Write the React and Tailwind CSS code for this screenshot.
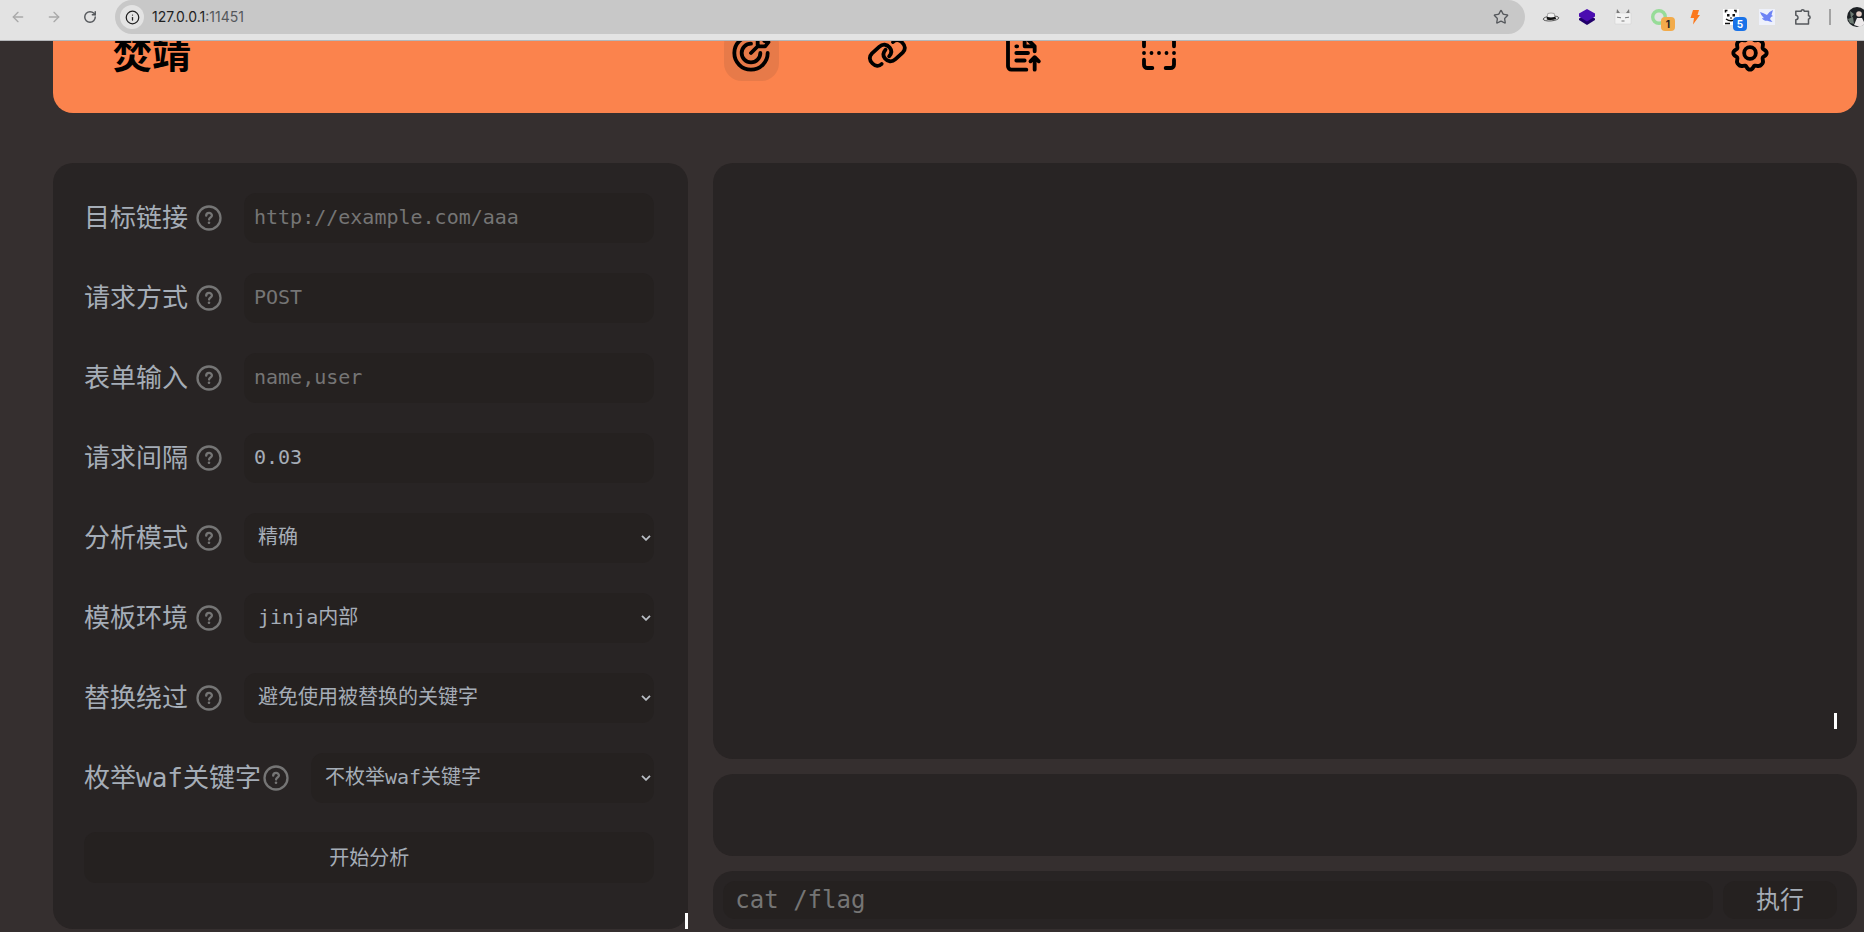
import React, { useState } from "react";
import { ArrowLeft, ArrowRight, Info, RotateCw, Star } from "lucide-react";

const fields = [
  { id: "url", label: "目标链接", placeholder: "http://example.com/aaa" },
  { id: "method", label: "请求方式", placeholder: "POST" },
  { id: "inputs", label: "表单输入", placeholder: "name,user" },
  { id: "interval", label: "请求间隔", value: "0.03" },
  { id: "analyze", label: "分析模式", options: ["精确", "快速"] },
  { id: "environment", label: "模板环境", options: ["jinja内部", "flask"] },
  {
    id: "replaced",
    label: "替换绕过",
    options: ["避免使用被替换的关键字", "双写被替换的关键字"],
  },
  {
    id: "waf",
    label: "枚举waf关键字",
    options: ["不枚举waf关键字", "枚举waf关键字"],
  },
];

const controlClass =
  "block h-[50px] w-full appearance-none rounded-xl bg-[#252120] pb-0.5 text-[20px] leading-[30px] text-[#a5adb7] outline-none placeholder:text-[#757575]";

const Icon = ({ children }) => (
  <svg
    viewBox="0 0 24 24"
    className="size-10 overflow-visible"
    fill="none"
    stroke="currentColor"
    strokeWidth="2.3"
    strokeLinecap="round"
    strokeLinejoin="round"
    aria-hidden="true"
  >
    {children}
  </svg>
);

const TargetIcon = () => (
  <Icon>
    <path d="M12 2a10 10 0 1 0 10 10" />
    <path d="M12 6.4a5.6 5.6 0 1 0 5.6 5.6" />
    <path d="M12 12l4.5-4.5M16 3.5V8h4.5l2-2.5-2.5-.8-.8-2.5z" />
  </Icon>
);

const LinkIcon = () => (
  <Icon>
    <path d="M8.8 18.6C7.2 20.3 5 20 3.3 18.3 1.2 16.2 1.2 14 3 12.2L7.3 8.3C9.5 6.3 12 6.8 13.6 8.7c1.4 1.7 1.2 3.6-.3 5.3" />
    <path d="M15.6 5.4C17.2 3.7 19.4 4 21.1 5.7c2.1 2.1 2.1 4.3.3 6.1L17.1 15.7c-2.2 2-4.7 1.5-6.3-.4-1.4-1.7-1.2-3.6.3-5.3" />
  </Icon>
);

const FileUploadIcon = () => (
  <Icon>
    <path d="M14 22H5a2 2 0 0 1-2-2V4a2 2 0 0 1 2-2h8l6 6v3" />
    <path d="M13 2.5V8h5.5M8 8h.5M8 12h7M8 16.5h5" />
    <path d="M19 22v-7M16.5 17l2.5-2.5 2.5 2.5" />
  </Icon>
);

const ScanIcon = () => (
  <Icon>
    <path d="M3 8V5a2 2 0 0 1 2-2h3M16 3h3a2 2 0 0 1 2 2v3M3 16v3a2 2 0 0 0 2 2h3M16 21h3a2 2 0 0 0 2-2v-3" />
    <path d="M3 12h.01M7.5 12h.01M12 12h.01M16.5 12h.01M21 12h.01" />
  </Icon>
);

const SettingsIcon = () => (
  <Icon>
    <path d="M9.2 4.4C10.2 4.1 10 2 12 2s1.800 2.100 2.800 2.400c1.200.4 2.700-1.200 4.100.7 1.900 1.400.3 2.900.7 4.100.3 1 2.400.8 2.400 2.800s-2.100 1.800-2.400 2.800c-.4 1.200 1.200 2.700-.7 4.100-1.400 1.900-2.900.3-4.100.7-1 .3-.8 2.400-2.800 2.400s-1.800-2.100-2.800-2.400c-1.200-.4-2.700 1.200-4.100-.7-1.900-1.400-.3-2.900-.7-4.100C4.100 13.800 2 14 2 12s2.100-1.800 2.400-2.800c.4-1.200-1.200-2.700.7-4.100 1.400-1.900 2.900-.3 4.100-.7z" />
    <circle cx="12" cy="12" r="3.5" />
  </Icon>
);

const tabs = [
  { name: "crack", icon: TargetIcon },
  { name: "path", icon: LinkIcon },
  { name: "request", icon: FileUploadIcon },
  { name: "scan", icon: ScanIcon },
];

const HelpIcon = () => (
  <svg viewBox="0 0 30 30" className="size-[30px] shrink-0" fill="none" stroke="#757575" aria-hidden="true">
    <circle cx="15" cy="15" r="11.5" strokeWidth="2.3" />
    <path d="M12.2 12.7c0-3.7 5.7-3.7 5.7-.2 0 2-2.8 2-2.8 4" strokeWidth="2.3" strokeLinecap="round" />
    <circle cx="15" cy="19.8" r="1.3" fill="#757575" stroke="none" />
  </svg>
);

const Field = ({ field }) => (
  <div className="flex h-[51px] items-center">
    <label htmlFor={field.id} className="min-w-[110px] shrink-0 text-[26px] leading-[36px] whitespace-nowrap">
      {field.label}
    </label>
    <HelpIcon />
    <div className="relative ml-5 min-w-0 flex-1">
      {field.options ? (
        <>
          <select id={field.id} className={`${controlClass} pl-3.5`}>
            {field.options.map((option) => (
              <option key={option}>{option}</option>
            ))}
          </select>
          <svg
            viewBox="0 0 10 6"
            className="pointer-events-none absolute top-[22px] right-[3px] h-1.5 w-2.5"
            fill="none"
            stroke="#b9bec5"
            strokeWidth="1.8"
            aria-hidden="true"
          >
            <path d="M1 .8l4 4 4-4" />
          </svg>
        </>
      ) : (
        <input
          id={field.id}
          type="text"
          placeholder={field.placeholder}
          defaultValue={field.value}
          className={`${controlClass} pl-2.5`}
        />
      )}
    </div>
  </div>
);

const Extension = ({ label, children }) => (
  <button type="button" aria-label={label} className="relative flex h-[34px] w-9 items-center justify-center">
    <svg viewBox="0 0 16 16" className="size-4 overflow-visible" aria-hidden="true">
      {children}
    </svg>
  </button>
);

const BrowserBar = () => (
  <div className="relative z-10 flex h-[41px] shrink-0 items-start overflow-hidden border-b border-[#b4b6b9] bg-[#e3e3e3] font-['Inter',sans-serif]">
    <button type="button" aria-label="Back" className="flex h-[34px] w-9 items-center justify-center text-[#a9a9a9]">
      <ArrowLeft size={16} />
    </button>
    <button type="button" aria-label="Forward" className="flex h-[34px] w-9 items-center justify-center text-[#a9a9a9]">
      <ArrowRight size={16} />
    </button>
    <button type="button" aria-label="Reload" className="flex h-[34px] w-9 items-center justify-center text-[#55585c]">
      <RotateCw size={14} strokeWidth={2.5} />
    </button>
    <div className="ml-[7px] flex h-[34px] min-w-0 flex-1 items-center rounded-full bg-[#c8c8c8] pr-4 pl-[5px]">
      <span className="flex size-6 items-center justify-center rounded-full bg-[#e3e3e3] text-[#1f1f1f]">
        <Info size={15} />
      </span>
      <span className="ml-2 flex-1 text-[14px] leading-5 text-[#1f1f1f]">
        127.0.0.1<span className="text-[#55585c]">:11451</span>
      </span>
      <Star size={16} className="text-[#55585c]" />
    </div>
    <div className="ml-2 flex">
      <Extension label="Hat">
        <ellipse cx="8" cy="9.5" rx="7.8" ry="2.4" fill="#e8e8e8" stroke="#222" strokeWidth=".7" transform="rotate(-5 8 9.5)" />
        <path d="M4 8.5l.8-4q3.200-1 6.400 0l.8 4q-4 1.500-8 0z" fill="#f2f2f2" stroke="#777" strokeWidth=".6" />
        <path d="M3.8 7.8q4.200 1.300 8.400 0l1 2.200q-5.200 1.800-9.400.4z" fill="#111" />
      </Extension>
      <Extension label="Layers">
        <path d="M0 9.5l8-4 8 4V11l-8 5-8-5z" fill="#21006b" />
        <path d="M0 4.500L8 0l8 4.500v3l-8 5-8-5z" fill="#4a0cb0" />
      </Extension>
      <Extension label="Cat">
        <path d="M0 4h16v11H0z" fill="#f2f2f2" stroke="#ccc" strokeWidth=".5" />
        <path d="M1.500 4L2 0l3 4zM11 4l3-4 .5 4z" fill="#777" />
        <path d="M2 8.200l4 .6M14 8.200l-4 .6M6.500 12h3" stroke="#777" />
      </Extension>
      <div className="relative">
        <Extension label="Ring">
          <circle cx="8" cy="8" r="6.3" fill="none" stroke="#97dc98" strokeWidth="3.4" />
        </Extension>
        <span className="absolute top-[17px] right-0.5 flex size-3.5 items-center justify-center rounded bg-[#f2ab4b] text-[10px] font-bold text-[#222]">
          1
        </span>
      </div>
      <Extension label="Bolt">
        <path d="M6 1h6l-1.500 5H13L6 15.500 7 9H3.500z" fill="#fb781d" />
      </Extension>
      <div className="relative">
        <Extension label="Panda">
          <path d="M0 0h16v16H0z" fill="#fff" />
          <path d="M2.500 3.500V1.500h2M11 1.500h2v2M3 10q5 3.500 10 0M2 14.500h5" stroke="#111" strokeWidth="1.5" fill="none" />
          <path d="M4 5h2.500v2.500H4zM9.500 5H12v2.500H9.500zM7 8.500h2v1H7z" fill="#111" />
        </Extension>
        <span className="absolute top-[17px] right-0.5 flex size-3.5 items-center justify-center rounded bg-[#1a73e8] text-[10px] font-bold text-white">
          5
        </span>
      </div>
      <Extension label="Bird">
        <path d="M0 0h16v16H0z" fill="#eef1fb" />
        <path d="M1 3q3.500 1 7 3 2-3.500 6-5l-1.500 5 1.500 1q-2.500.5-3 3l2.500 3q-3-.5-5-1.200Q4 12 3 9l2 .2Q2 6.500 1 3z" fill="#6d83f5" />
      </Extension>
      <Extension label="Extensions">
        <path
          d="M.8 2.200h5.400a1.500 1.500 0 0 1 3 0h4.300v4.500a1.500 1.500 0 0 1 0 3.200v5H.8v-4.200a2.200 2.200 0 0 0 0-4.400z"
          fill="none"
          stroke="#55585c"
          strokeWidth="1.5"
          strokeLinejoin="round"
        />
      </Extension>
    </div>
    <span className="mt-[9px] mr-4 ml-2 h-4 w-0.5 bg-[#a3a3a3]" />
    <button type="button" aria-label="Profile" className="mt-[7px] w-[17px] overflow-hidden">
      <svg viewBox="0 0 20 20" className="size-5 max-w-none" aria-hidden="true">
        <circle cx="10" cy="10" r="10" fill="#1c2024" />
        <path d="M3 4l4 3-3 4zM1 12l5-2 1 7-4-1z" fill="#6c7a72" />
        <circle cx="12" cy="7" r="2.8" fill="#e5cfc6" />
        <path d="M7 18l3-7h5l3 6-5 3z" fill="#ece9ea" />
      </svg>
    </button>
  </div>
);

const App = () => {
  const [activeTab, setActiveTab] = useState("crack");

  return (
    <div className="flex min-h-screen flex-col overflow-hidden bg-[#352f2f] font-['DejaVu_Sans_Mono','Noto_Sans_CJK_SC',monospace] text-[#a5adb7]">
      <BrowserBar />

      <div className="flex flex-1 flex-col pr-[7px] pb-[3px] pl-[53px]">
        {/* header is scrolled partly under the toolbar */}
        <header className="-mt-12 flex h-[120px] items-center rounded-[20px] bg-[#fb834d] px-[60px] text-black">
          <h1 className="flex-1 pb-1 font-['Noto_Sans_CJK_SC',sans-serif] text-[39px] leading-[56px] font-bold">焚靖</h1>
          <nav className="flex gap-[81px]">
            {tabs.map(({ name, icon: TabIcon }) => (
              <button
                key={name}
                type="button"
                aria-label={name}
                onClick={() => setActiveTab(name)}
                className={`flex size-[55px] items-center justify-center rounded-[18px] ${
                  activeTab === name ? "bg-[#e77a49]" : ""
                }`}
              >
                <TabIcon />
              </button>
            ))}
          </nav>
          <div className="flex flex-1 justify-end">
            <button type="button" aria-label="settings" className="mr-5 flex size-[55px] items-center justify-center">
              <SettingsIcon />
            </button>
          </div>
        </header>

        <main className="mt-[50px] grid flex-1 grid-cols-[minmax(0,5fr)_minmax(0,9fr)] gap-[25px]">
          <form
            onSubmit={(e) => e.preventDefault()}
            className="relative flex flex-col gap-[29px] rounded-[20px] bg-[#282424] pt-[29px] pr-[34px] pb-[46px] pl-[31px]"
          >
            {fields.map((field) => (
              <Field key={field.id} field={field} />
            ))}
            <button type="submit" className="h-[51px] rounded-xl bg-[#252120] text-[20px] leading-[30px]">
              开始分析
            </button>
            <span className="absolute right-0 bottom-0 h-4 w-[3px] bg-white" />
          </form>

          <div className="flex flex-col gap-[15px]">
            <section className="relative flex-1 rounded-[20px] bg-[#282424]">
              <span className="absolute right-5 bottom-[30px] h-4 w-[3px] bg-white" />
            </section>
            <section className="h-[82px] rounded-[20px] bg-[#282424]" />
            <form
              onSubmit={(e) => e.preventDefault()}
              className="flex h-[58px] gap-2.5 rounded-[20px] bg-[#282424] py-2.5 pr-5 pl-2.5"
            >
              <input
                type="text"
                aria-label="command"
                placeholder="cat /flag"
                className="min-w-0 flex-1 rounded-xl bg-[#252120] px-3 text-[24px] outline-none placeholder:text-[#757575]"
              />
              <button type="submit" className="w-[114px] rounded-xl bg-[#252120] text-[24px] leading-[36px]">
                执行
              </button>
            </form>
          </div>
        </main>
      </div>
    </div>
  );
};

export default App;
